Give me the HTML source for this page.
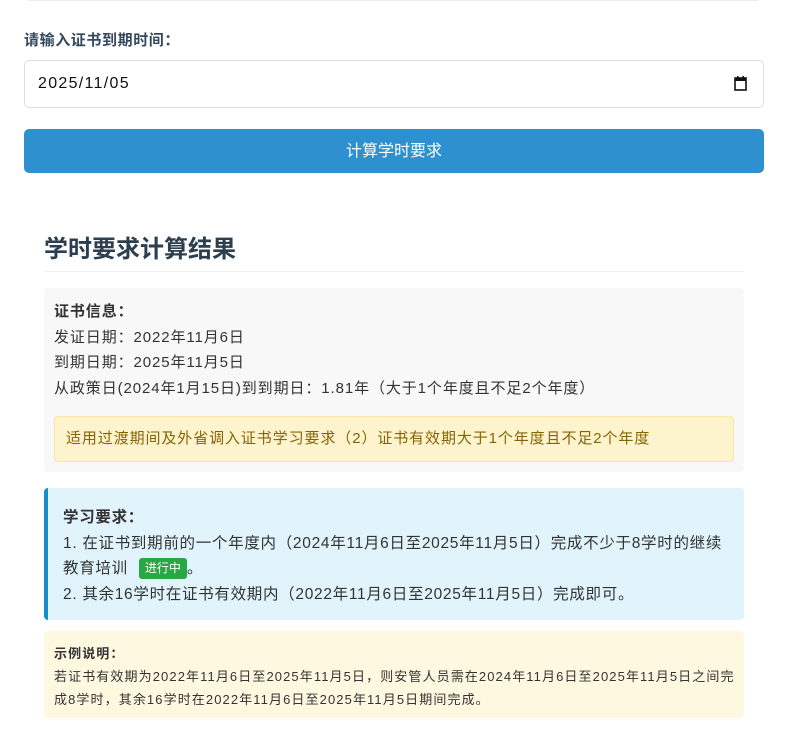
<!DOCTYPE html>
<html><head><meta charset="utf-8"><style>
body{margin:0;background:#fff;font-family:"Liberation Sans","Noto Sans CJK SC",sans-serif;color:#333;width:787px;height:735px;overflow:hidden;position:relative}
.a{position:absolute}
</style></head><body>
<div class="a" style="left:28px;top:0;width:730px;height:1px;background:#e8ecef"></div>
<div class="a" style="left:24px;top:29px;font-size:15px;font-weight:bold;color:#34495e;letter-spacing:0.6px">请输入证书到期时间：</div>
<div class="a" style="left:24px;top:60px;width:740px;height:48px;border:1px solid #ddd;border-radius:5px;box-sizing:border-box;"></div>
<div class="a" style="left:38px;top:75px;font-size:16px;color:#111;letter-spacing:1.3px">2025/11/05</div>
<svg class="a" style="left:734px;top:76px" width="13" height="15" viewBox="0 0 13 15"><rect x="1" y="2" width="11" height="12" fill="none" stroke="#111" stroke-width="1.6"/><rect x="1" y="2" width="11" height="3" fill="#111"/><rect x="3" y="0" width="1.5" height="3" fill="#111"/><rect x="8.5" y="0" width="1.5" height="3" fill="#111"/></svg>
<div class="a" style="left:24px;top:129px;width:740px;height:44px;background:#2e90cf;border-radius:5px;color:#fff;font-size:16px;line-height:46px;text-align:center">计算学时要求</div>
<div class="a" style="left:44px;top:229px;font-size:24px;font-weight:bold;color:#2c3e50">学时要求计算结果</div>
<div class="a" style="left:44px;top:271px;width:700px;height:1px;background:#eceff1"></div>
<div class="a" style="left:44px;top:288px;width:700px;height:184px;background:#f8f8f8;border-radius:4px"></div>
<div class="a" style="left:54px;top:299px;font-size:15px;line-height:25.5px;color:#333;letter-spacing:0.9px">
<b>证书信息：</b><br>发证日期：2022年11月6日<br>到期日期：2025年11月5日<br>从政策日(2024年1月15日)到到期日：1.81年（大于1个年度且不足2个年度）</div>
<div class="a" style="left:54px;top:416px;width:680px;height:46px;background:#fdf3cd;border:1px solid #fae6a0;border-radius:4px;box-sizing:border-box;color:#856404;font-size:15px;line-height:44px;padding-left:11px;letter-spacing:0.9px">适用过渡期间及外省调入证书学习要求（2）证书有效期大于1个年度且不足2个年度</div>
<div class="a" style="left:44px;top:488px;width:700px;height:132px;background:#e1f3fb;border-left:4px solid #1a8cc8;border-radius:4px;box-sizing:border-box"></div>
<div class="a" style="left:63px;top:505px;font-size:15.5px;line-height:25.7px;color:#333;letter-spacing:0.7px">
<b>学习要求：</b><br>1. 在证书到期前的一个年度内（2024年11月6日至2025年11月5日）完成不少于8学时的继续<br>教育培训 <span style="display:inline-block;background:#28a745;color:#fff;font-size:12px;line-height:21px;padding:0 6px;border-radius:3px;margin-left:6px;vertical-align:1px;letter-spacing:0">进行中</span>。<br>2. 其余16学时在证书有效期内（2022年11月6日至2025年11月5日）完成即可。</div>
<div class="a" style="left:44px;top:631px;width:700px;height:87px;background:#fff8e1;border-radius:4px"></div>
<div class="a" style="left:54px;top:642px;font-size:13px;line-height:23px;color:#333;letter-spacing:1.1px;white-space:nowrap">
<b>示例说明：</b><br>若证书有效期为2022年11月6日至2025年11月5日，则安管人员需在2024年11月6日至2025年11月5日之间完<br>成8学时，其余16学时在2022年11月6日至2025年11月5日期间完成。</div>
</body></html>
